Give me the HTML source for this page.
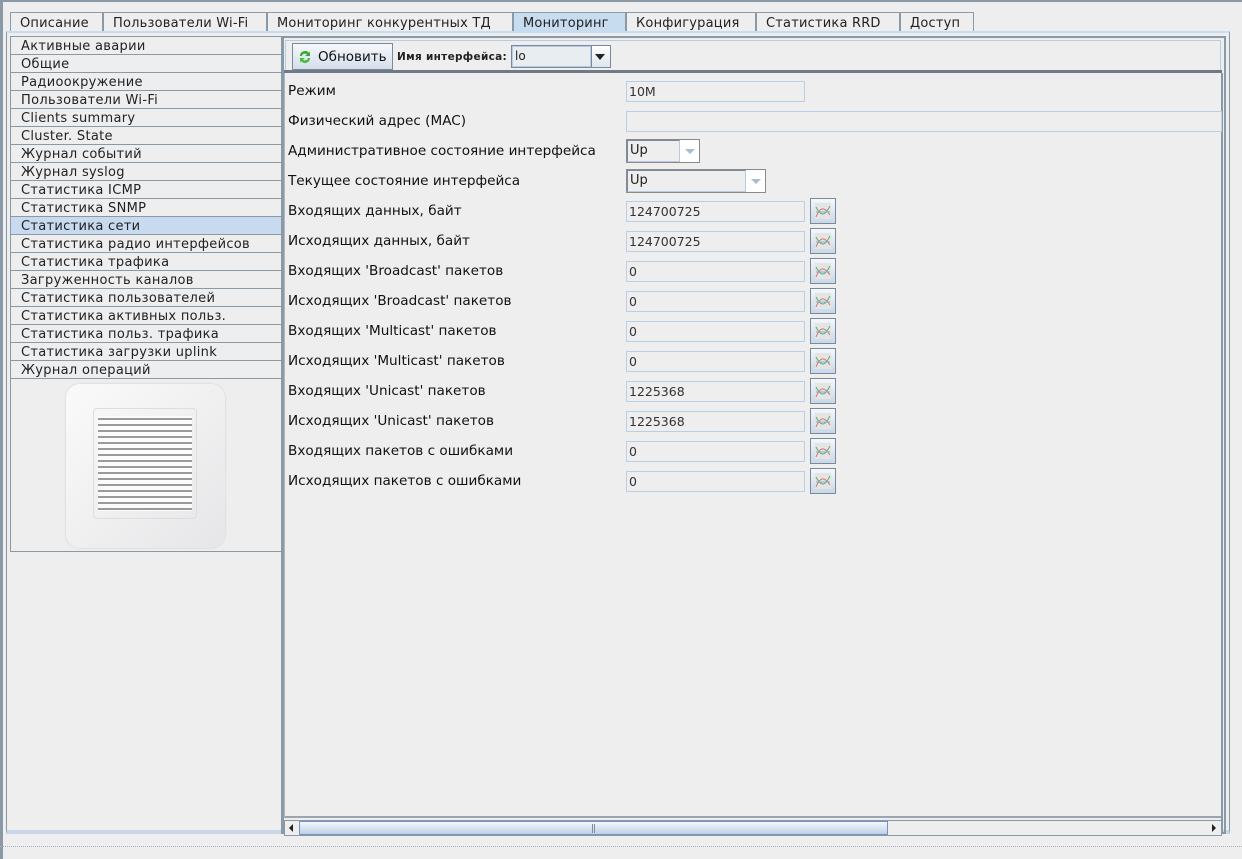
<!DOCTYPE html>
<html><head><meta charset="utf-8"><style>
*{box-sizing:border-box;margin:0;padding:0}
body{width:1242px;height:859px;background:#eeeeee;position:relative;overflow:hidden;font-family:"DejaVu Sans","Liberation Sans",sans-serif;font-size:13px;color:#222}
.a{position:absolute}
.tab{position:absolute;top:12px;height:20px;border:1px solid #8a99a6;border-bottom:none;background:#eeeeee;padding:3px 0 0 9px;white-space:nowrap;letter-spacing:0.2px}
.tab.sel{background:#c8dcf0;top:12px;height:21px}
.li{position:absolute;left:11px;width:270px;height:18px;border-top:1px solid #8a99a6;padding:1px 0 0 10px;line-height:17px;white-space:nowrap;letter-spacing:0.3px}
.li.sel{background:#c8daf0}
.lb{position:absolute;left:288px;font-family:"DejaVu Sans",sans-serif;font-size:13.6px;color:#111}
.fld{position:absolute;left:626px;width:179px;height:21px;border:1px solid #b8cfe5;background:#eeeeee;padding:2px 0 0 2px;font-size:12.5px;color:#333;font-family:"DejaVu Sans",sans-serif}
.cb{position:absolute;left:810px;width:26px;height:26px;border:1px solid #7a8a9a;background:linear-gradient(#f4f8fc,#c8d8e8)}
.cb svg{position:absolute;left:4px;top:4px}
</style></head><body>
<div class="a" style="left:0;top:0;width:1242px;height:2px;background:#8a99a6"></div>
<div class="a" style="left:0;top:0;width:3px;height:859px;background:#8a99a6"></div>
<div class="tab" style="left:10px;width:93px">Описание</div>
<div class="tab" style="left:103px;width:164px">Пользователи Wi-Fi</div>
<div class="tab" style="left:267px;width:246px">Мониторинг конкурентных ТД</div>
<div class="tab sel" style="left:513px;width:113px">Мониторинг</div>
<div class="tab" style="left:626px;width:130px">Конфигурация</div>
<div class="tab" style="left:756px;width:144px">Статистика RRD</div>
<div class="tab" style="left:900px;width:74px">Доступ</div>
<div class="a" style="left:6px;top:31px;width:1224px;height:803px;border:1px solid #8a99a6;border-top:2px solid #c8dcf0;border-bottom:4px solid #c8d8e8"></div>
<div class="a" style="left:10px;top:36px;width:272px;height:516px;border:1px solid #8a99a6;background:#eeeeee"></div>
<div class="li" style="top:37px;border-top:none">Активные аварии</div>
<div class="li" style="top:54px">Общие</div>
<div class="li" style="top:72px">Радиоокружение</div>
<div class="li" style="top:90px">Пользователи Wi-Fi</div>
<div class="li" style="top:108px">Clients summary</div>
<div class="li" style="top:126px">Cluster. State</div>
<div class="li" style="top:144px">Журнал событий</div>
<div class="li" style="top:162px">Журнал syslog</div>
<div class="li" style="top:180px">Статистика ICMP</div>
<div class="li" style="top:198px">Статистика SNMP</div>
<div class="li sel" style="top:216px">Статистика сети</div>
<div class="li" style="top:234px">Статистика радио интерфейсов</div>
<div class="li" style="top:252px">Статистика трафика</div>
<div class="li" style="top:270px">Загруженность каналов</div>
<div class="li" style="top:288px">Статистика пользователей</div>
<div class="li" style="top:306px">Статистика активных польз.</div>
<div class="li" style="top:324px">Статистика польз. трафика</div>
<div class="li" style="top:342px">Статистика загрузки uplink</div>
<div class="li" style="top:360px">Журнал операций</div>
<div class="a" style="left:11px;top:378px;width:270px;height:1px;background:#8a99a6"></div>
<div class="a" style="left:66px;top:384px;width:159px;height:164px;border-radius:14px;background:linear-gradient(135deg,#fafafa,#e6e6e8);box-shadow:0 0 2px #ccc"></div>
<div class="a" style="left:93px;top:408px;width:104px;height:111px;border:1px solid #ddd;border-radius:4px;background:repeating-linear-gradient(#fbfbfb 0 3px,#9a9a9a 3px 5px,#fbfbfb 5px 6px);background-clip:content-box;padding:7px 4px"></div>
<div class="a" style="left:281px;top:36px;width:945px;height:798px;border:2px solid #8a99a6;border-left:3px solid #8a99a6"></div>
<div class="a" style="left:285px;top:40px;width:936px;height:30px;border:1px solid #b8cbe0;border-bottom:none"></div>
<div class="a" style="left:292px;top:43px;width:101px;height:27px;border:1px solid #7a8a9a;background:linear-gradient(#f6f8fb,#d4dfeb);padding:5px 0 0 25px;font-size:13.5px;color:#111">Обновить</div>
<svg class="a" style="left:297px;top:49px" width="16" height="16" viewBox="0 0 16 16"><path d="M3 7a5 5 0 0 1 9-3l1-2v5h-5l2-1.5A3 3 0 0 0 5 7z" fill="#3aa83a"/><path d="M13 9a5 5 0 0 1-9 3l-1 2V9h5l-2 1.5A3 3 0 0 0 11 9z" fill="#4cbb3c"/></svg>
<div class="a" style="left:397px;top:51px;font-size:10.5px;letter-spacing:0.3px;font-weight:bold;color:#222">Имя интерфейса:</div>
<div class="a" style="left:511px;top:45px;width:100px;height:23px;border:1px solid #7a8a9a;background:#e8edf2"></div>
<div class="a" style="left:512px;top:46px;width:79px;height:21px;border:1px solid #b8cbe0;padding:2px 0 0 2px;font-size:12px">lo</div>
<div class="a" style="left:591px;top:46px;width:19px;height:21px;border-left:1px solid #7a8a9a;background:linear-gradient(#fff,#dde5ee)"></div>
<div class="a" style="left:595px;top:54px;width:0;height:0;border-left:5px solid transparent;border-right:5px solid transparent;border-top:6px solid #222"></div>
<div class="a" style="left:284px;top:70px;width:938px;height:3px;background:#707a86"></div>
<div class="a" style="left:284px;top:73px;width:938px;height:745px;border-bottom:2px solid #9aa5b0;background:#eeeeee"></div>
<div class="a" style="left:284px;top:73px;width:1px;height:745px;background:#aeb8c2"></div>
<div class="a" style="left:1221px;top:73px;width:2px;height:760px;background:#8a99a6"></div>

<div class="lb" style="top:83px">Режим</div><div class="fld" style="top:81px">10M</div>
<div class="lb" style="top:113px">Физический адрес (MAC)</div><div class="fld" style="top:111px;width:596px"></div>
<div class="lb" style="top:143px">Административное состояние интерфейса</div>
<div class="a" style="left:626px;top:139px;width:74px;height:24px;border:1px solid #8a8a8a;background:#fff"></div>
<div class="a" style="left:627px;top:140px;width:53px;height:22px;border:1px solid #7a8a9a;border-right-color:#b8cbe0;border-bottom-color:#b8cbe0;background:#eeeeee;padding:2px 0 0 2px">Up</div>
<div class="a" style="left:685px;top:149px;border-left:5px solid transparent;border-right:5px solid transparent;border-top:5px solid #a8bcd4"></div>
<div class="lb" style="top:173px">Текущее состояние интерфейса</div>
<div class="a" style="left:626px;top:169px;width:140px;height:24px;border:1px solid #8a8a8a;background:#fff"></div>
<div class="a" style="left:627px;top:170px;width:119px;height:22px;border:1px solid #7a8a9a;border-right-color:#b8cbe0;border-bottom-color:#b8cbe0;background:#eeeeee;padding:2px 0 0 2px">Up</div>
<div class="a" style="left:751px;top:179px;border-left:5px solid transparent;border-right:5px solid transparent;border-top:5px solid #a8bcd4"></div>

<div class="lb" style="top:203px">Входящих данных, байт</div><div class="fld" style="top:201px">124700725</div>
<div class="lb" style="top:233px">Исходящих данных, байт</div><div class="fld" style="top:231px">124700725</div>
<div class="lb" style="top:263px">Входящих 'Broadcast' пакетов</div><div class="fld" style="top:261px">0</div>
<div class="lb" style="top:293px">Исходящих 'Broadcast' пакетов</div><div class="fld" style="top:291px">0</div>
<div class="lb" style="top:323px">Входящих 'Multicast' пакетов</div><div class="fld" style="top:321px">0</div>
<div class="lb" style="top:353px">Исходящих 'Multicast' пакетов</div><div class="fld" style="top:351px">0</div>
<div class="lb" style="top:383px">Входящих 'Unicast' пакетов</div><div class="fld" style="top:381px">1225368</div>
<div class="lb" style="top:413px">Исходящих 'Unicast' пакетов</div><div class="fld" style="top:411px">1225368</div>
<div class="lb" style="top:443px">Входящих пакетов с ошибками</div><div class="fld" style="top:441px">0</div>
<div class="lb" style="top:473px">Исходящих пакетов с ошибками</div><div class="fld" style="top:471px">0</div>

<div class="cb" style="top:198px"><svg width="16" height="16"><rect width="16" height="16" fill="#e4e4e4"/><path d="M1 14C5 4 9 3 15 12" stroke="#e07070" fill="none"/><path d="M1 4C6 14 10 13 15 3" stroke="#60b060" fill="none"/><path d="M1 9H15" stroke="#7ab0e0"/></svg></div>
<div class="cb" style="top:228px"><svg width="16" height="16"><rect width="16" height="16" fill="#e4e4e4"/><path d="M1 14C5 4 9 3 15 12" stroke="#e07070" fill="none"/><path d="M1 4C6 14 10 13 15 3" stroke="#60b060" fill="none"/><path d="M1 9H15" stroke="#7ab0e0"/></svg></div>
<div class="cb" style="top:258px"><svg width="16" height="16"><rect width="16" height="16" fill="#e4e4e4"/><path d="M1 14C5 4 9 3 15 12" stroke="#e07070" fill="none"/><path d="M1 4C6 14 10 13 15 3" stroke="#60b060" fill="none"/><path d="M1 9H15" stroke="#7ab0e0"/></svg></div>
<div class="cb" style="top:288px"><svg width="16" height="16"><rect width="16" height="16" fill="#e4e4e4"/><path d="M1 14C5 4 9 3 15 12" stroke="#e07070" fill="none"/><path d="M1 4C6 14 10 13 15 3" stroke="#60b060" fill="none"/><path d="M1 9H15" stroke="#7ab0e0"/></svg></div>
<div class="cb" style="top:318px"><svg width="16" height="16"><rect width="16" height="16" fill="#e4e4e4"/><path d="M1 14C5 4 9 3 15 12" stroke="#e07070" fill="none"/><path d="M1 4C6 14 10 13 15 3" stroke="#60b060" fill="none"/><path d="M1 9H15" stroke="#7ab0e0"/></svg></div>
<div class="cb" style="top:348px"><svg width="16" height="16"><rect width="16" height="16" fill="#e4e4e4"/><path d="M1 14C5 4 9 3 15 12" stroke="#e07070" fill="none"/><path d="M1 4C6 14 10 13 15 3" stroke="#60b060" fill="none"/><path d="M1 9H15" stroke="#7ab0e0"/></svg></div>
<div class="cb" style="top:378px"><svg width="16" height="16"><rect width="16" height="16" fill="#e4e4e4"/><path d="M1 14C5 4 9 3 15 12" stroke="#e07070" fill="none"/><path d="M1 4C6 14 10 13 15 3" stroke="#60b060" fill="none"/><path d="M1 9H15" stroke="#7ab0e0"/></svg></div>
<div class="cb" style="top:408px"><svg width="16" height="16"><rect width="16" height="16" fill="#e4e4e4"/><path d="M1 14C5 4 9 3 15 12" stroke="#e07070" fill="none"/><path d="M1 4C6 14 10 13 15 3" stroke="#60b060" fill="none"/><path d="M1 9H15" stroke="#7ab0e0"/></svg></div>
<div class="cb" style="top:438px"><svg width="16" height="16"><rect width="16" height="16" fill="#e4e4e4"/><path d="M1 14C5 4 9 3 15 12" stroke="#e07070" fill="none"/><path d="M1 4C6 14 10 13 15 3" stroke="#60b060" fill="none"/><path d="M1 9H15" stroke="#7ab0e0"/></svg></div>
<div class="cb" style="top:468px"><svg width="16" height="16"><rect width="16" height="16" fill="#e4e4e4"/><path d="M1 14C5 4 9 3 15 12" stroke="#e07070" fill="none"/><path d="M1 4C6 14 10 13 15 3" stroke="#60b060" fill="none"/><path d="M1 9H15" stroke="#7ab0e0"/></svg></div>

<div class="a" style="left:284px;top:820px;width:938px;height:16px;border:1px solid #8a99a6;background:#eeeeee"></div>
<div class="a" style="left:299px;top:821px;width:589px;height:14px;border:1px solid #7a90c0;background:linear-gradient(#f4f8fc,#bcd0ea)"></div>
<div class="a" style="left:592px;top:824px;width:3px;height:9px;border-left:1px solid #889;border-right:1px solid #889"></div>
<div class="a" style="left:289px;top:824px;border-top:4px solid transparent;border-bottom:4px solid transparent;border-right:4px solid #222"></div>
<div class="a" style="left:1212px;top:824px;border-top:4px solid transparent;border-bottom:4px solid transparent;border-left:4px solid #222"></div>
<div class="a" style="left:0;top:846px;width:1242px;height:13px;border-top:1px dotted #aab"></div>
</body></html>
